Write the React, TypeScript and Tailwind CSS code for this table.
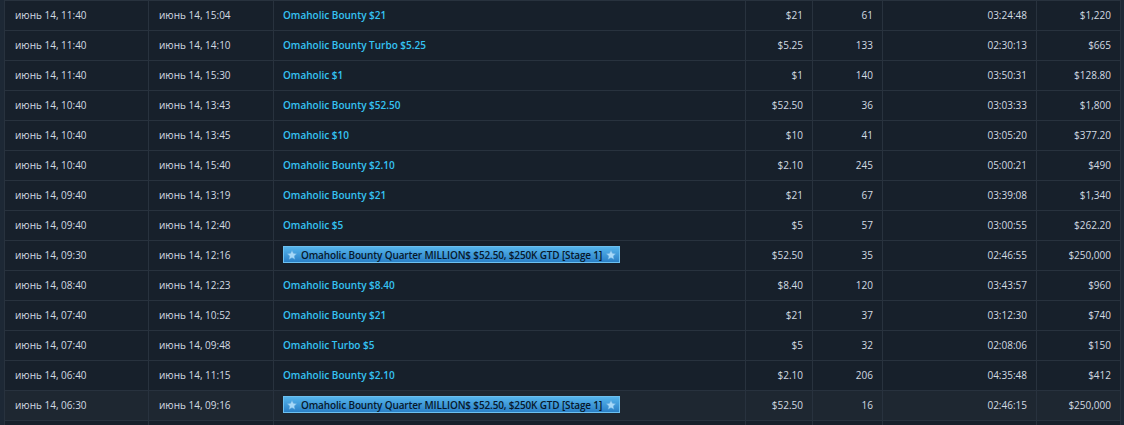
import React from "react";

type Row = { start: string; end: string; name: string; buyin: string; entries: string; dur: string; prize: string; special?: boolean };

const rows: Row[] = [
  { start: "июнь 14, 11:40", end: "июнь 14, 15:04", name: "Omaholic Bounty $21", buyin: "$21", entries: "61", dur: "03:24:48", prize: "$1,220" },
  { start: "июнь 14, 11:40", end: "июнь 14, 14:10", name: "Omaholic Bounty Turbo $5.25", buyin: "$5.25", entries: "133", dur: "02:30:13", prize: "$665" },
  { start: "июнь 14, 11:40", end: "июнь 14, 15:30", name: "Omaholic $1", buyin: "$1", entries: "140", dur: "03:50:31", prize: "$128.80" },
  { start: "июнь 14, 10:40", end: "июнь 14, 13:43", name: "Omaholic Bounty $52.50", buyin: "$52.50", entries: "36", dur: "03:03:33", prize: "$1,800" },
  { start: "июнь 14, 10:40", end: "июнь 14, 13:45", name: "Omaholic $10", buyin: "$10", entries: "41", dur: "03:05:20", prize: "$377.20" },
  { start: "июнь 14, 10:40", end: "июнь 14, 15:40", name: "Omaholic Bounty $2.10", buyin: "$2.10", entries: "245", dur: "05:00:21", prize: "$490" },
  { start: "июнь 14, 09:40", end: "июнь 14, 13:19", name: "Omaholic Bounty $21", buyin: "$21", entries: "67", dur: "03:39:08", prize: "$1,340" },
  { start: "июнь 14, 09:40", end: "июнь 14, 12:40", name: "Omaholic $5", buyin: "$5", entries: "57", dur: "03:00:55", prize: "$262.20" },
  { start: "июнь 14, 09:30", end: "июнь 14, 12:16", name: "Omaholic Bounty Quarter MILLION$ $52.50, $250K GTD [Stage 1]", buyin: "$52.50", entries: "35", dur: "02:46:55", prize: "$250,000", special: true },
  { start: "июнь 14, 08:40", end: "июнь 14, 12:23", name: "Omaholic Bounty $8.40", buyin: "$8.40", entries: "120", dur: "03:43:57", prize: "$960" },
  { start: "июнь 14, 07:40", end: "июнь 14, 10:52", name: "Omaholic Bounty $21", buyin: "$21", entries: "37", dur: "03:12:30", prize: "$740" },
  { start: "июнь 14, 07:40", end: "июнь 14, 09:48", name: "Omaholic Turbo $5", buyin: "$5", entries: "32", dur: "02:08:06", prize: "$150" },
  { start: "июнь 14, 06:40", end: "июнь 14, 11:15", name: "Omaholic Bounty $2.10", buyin: "$2.10", entries: "206", dur: "04:35:48", prize: "$412" },
  { start: "июнь 14, 06:30", end: "июнь 14, 09:16", name: "Omaholic Bounty Quarter MILLION$ $52.50, $250K GTD [Stage 1]", buyin: "$52.50", entries: "16", dur: "02:46:15", prize: "$250,000", special: true },
];

const Star = () => (
  <svg width="12" height="12" viewBox="0 0 24 24" className="shrink-0">
    <path d="M12 2.5l2.9 6.1 6.6.8-4.9 4.6 1.3 6.6L12 17.3l-5.9 3.3 1.3-6.6L2.5 9.4l6.6-.8z" fill="#a6d8f7" stroke="#5aa7dc" strokeWidth="1" />
  </svg>
);

const cell = "border border-[#28323e]";

export default function App() {
  return (
    <div className="w-[1124px] h-[425px] overflow-hidden bg-[#1d2835] px-[4px]" style={{ fontFamily: '"Open Sans", "Noto Sans", sans-serif' }}>
      <table className="w-[1116px] table-fixed border-collapse text-[10px] text-[#d3dbe3]">
        <colgroup>
          <col className="w-[144px]" />
          <col className="w-[125px]" />
          <col className="w-[472px]" />
          <col className="w-[67px]" />
          <col className="w-[70px]" />
          <col className="w-[154px]" />
          <col className="w-[84px]" />
        </colgroup>
        <tbody>
          {rows.map((r, i) => (
            <tr key={i} className={`h-[30px] ${i === rows.length - 1 ? "bg-[#1e2731]" : "bg-[#17202b]"}`}>
              <td className={`${cell} pl-[10px] whitespace-nowrap`}>{r.start}</td>
              <td className={`${cell} pl-[10px] whitespace-nowrap`}>{r.end}</td>
              <td className={`${cell} pl-[9px] whitespace-nowrap`}>
                {r.special ? (
                  <span className="inline-flex items-center gap-[3px] h-[17px] px-[2px] bg-gradient-to-b from-[#55b4ec] to-[#2a80c6] border border-[#6cc0f0] text-[#07182a] text-[10px] font-semibold tracking-[-0.15px]">
                    <Star />
                    <span className="leading-none">{r.name}</span>
                    <Star />
                  </span>
                ) : (
                  <span className="text-[#35c3f3] font-semibold">{r.name}</span>
                )}
              </td>
              <td className={`${cell} pr-[9px] text-right`}>{r.buyin}</td>
              <td className={`${cell} pr-[9px] text-right`}>{r.entries}</td>
              <td className={`${cell} pr-[9px] text-right`}>{r.dur}</td>
              <td className={`${cell} pr-[9px] text-right`}>{r.prize}</td>
            </tr>
          ))}
          <tr className="h-[30px] bg-[#17202b]">
            <td className={cell} />
            <td className={cell} />
            <td className={cell} />
            <td className={cell} />
            <td className={cell} />
            <td className={cell} />
            <td className={cell} />
          </tr>
        </tbody>
      </table>
    </div>
  );
}
